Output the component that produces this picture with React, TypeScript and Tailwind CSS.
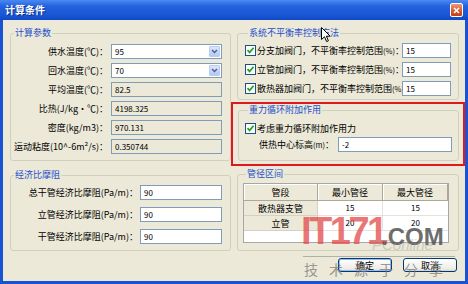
import React from "react";

const Check = () => (
  <span className="flex h-[11px] w-[11px] shrink-0 items-center justify-center border border-[#1C5180] bg-white">
    <svg width="9" height="9" viewBox="0 0 9 9">
      <path d="M1.5 4.2 L3.6 6.4 L7.6 1.8" fill="none" stroke="#21A121" strokeWidth="1.7" />
    </svg>
  </span>
);

const Drop = () => (
  <span className="mr-[1px] flex h-[11px] w-[11px] items-center justify-center rounded-[1px] border border-[#B8CCF8] bg-[linear-gradient(#DCE6FD,#B4C8F6)]">
    <svg width="7" height="5" viewBox="0 0 7 5">
      <path d="M1 1 L3.5 3.5 L6 1" fill="none" stroke="#4D6185" strokeWidth="1.4" />
    </svg>
  </span>
);

type FieldProps = { value: string; readOnly?: boolean; combo?: boolean; className?: string };

const Field = ({ value, readOnly, combo, className = "" }: FieldProps) => (
  <div
    className={`flex h-[15px] items-center border border-[#7F9DB9] ${
      readOnly ? "bg-[#ECE9D8]" : "bg-white"
    } ${className}`}
  >
    <span className="flex-1 pl-[3px] text-[8px] leading-none text-black">{value}</span>
    {combo && <Drop />}
  </div>
);

const Group = ({
  title,
  className = "",
  children,
}: {
  title: string;
  className?: string;
  children: React.ReactNode;
}) => (
  <fieldset className={`rounded-[3px] border border-[#D0D0BF] ${className}`}>
    <legend className="ml-[3px] px-[1px] text-[9px] leading-[10px] text-[#1E4FCB]">{title}</legend>
    {children}
  </fieldset>
);

const params = [
  { label: "供水温度(℃)：", value: "95", combo: true },
  { label: "回水温度(℃)：", value: "70", combo: true },
  { label: "平均温度(℃)：", value: "82.5", ro: true },
  { label: "比热(J/kg·℃)：", value: "4198.325", ro: true },
  { label: "密度(kg/m3)：", value: "970.131", ro: true },
  { label: "运动粘度(10^-6m²/s)：", value: "0.350744", ro: true },
];

const friction = ["总干管经济比摩阻(Pa/m)：", "立管经济比摩阻(Pa/m)：", "干管经济比摩阻(Pa/m)："];

const balance = [
  "分支加阀门，不平衡率控制范围",
  "立管加阀门，不平衡率控制范围",
  "散热器加阀门，不平衡率控制范围",
];

export default function App() {
  return (
    <div className="relative flex h-[284px] w-[468px] flex-col overflow-hidden bg-[#1A52D4] font-['Noto_Sans_CJK_SC',sans-serif] text-black">
      {/* title bar */}
      <div className="flex h-[20px] shrink-0 items-center justify-between bg-[linear-gradient(#4A8AF2,#2463DE_30%,#1856D6_75%,#1148C4)] pl-[5px] pr-[5px]">
        <span className="text-[10px] font-bold leading-none text-white [text-shadow:1px_1px_0_#0A2E8C]">计算条件</span>
        <span className="flex h-[14px] w-[13px] items-center justify-center rounded-[2px] border border-white bg-[linear-gradient(#EE9A78,#D9542C_60%,#C23E1A)]">
          <svg width="7" height="7" viewBox="0 0 7 7">
            <path d="M1 1 L6 6 M6 1 L1 6" stroke="white" strokeWidth="1.6" />
          </svg>
        </span>
      </div>

      {/* body */}
      <div className="mx-[3px] mb-[3px] flex flex-1 gap-[6px] bg-[#ECE9D8] pl-[7px] pr-[6px] pt-[8px]">
        {/* left column */}
        <div className="flex w-[221px] flex-col">
          <Group title="计算参数" className="pb-[6px] pr-[8px]">
            <div className="flex flex-col gap-[4px] pt-[6px]">
              {params.map((p) => (
                <div key={p.label} className="flex items-center">
                  <span className="w-[97px] whitespace-nowrap text-right text-[9px] leading-[10px]">{p.label}</span>
                  <Field value={p.value} combo={p.combo} readOnly={p.ro} className="ml-[3px] flex-1" />
                </div>
              ))}
            </div>
          </Group>
          <Group title="经济比摩阻" className="mt-[9px] pb-[6px] pr-[8px]">
            <div className="flex flex-col gap-[7px] pt-[5px]">
              {friction.map((l) => (
                <div key={l} className="flex items-center">
                  <span className="w-[127px] whitespace-nowrap text-right text-[9px] leading-[10px]">{l}</span>
                  <Field value="90" className="ml-[2px] flex-1" />
                </div>
              ))}
            </div>
          </Group>
        </div>

        {/* right column */}
        <div className="flex w-[222px] flex-col">
          <Group title="系统不平衡率控制方法" className="pb-[3px] pl-[7px] pr-[7px]">
            <div className="flex flex-col gap-[4px] pt-[5px]">
              {balance.map((l, i) => (
                <div key={l} className="flex items-center">
                  <Check />
                  <span className="ml-[1px] w-[145px] whitespace-nowrap text-[9px] leading-[10px]">
                    {l}
                    <span className="text-[7.5px]">(%)</span>
                    {i < 2 ? "：" : ""}
                  </span>
                  <Field value="15" className="flex-1" />
                </div>
              ))}
            </div>
          </Group>

          <div className="-mx-[6px] mt-[2px] border-2 border-[#E0191F] pb-[3px] pl-[5px] pr-[4px] pt-[1px]">
            <Group title="重力循环附加作用" className="pb-[8px] pl-[6px] pr-[6px]">
              <div className="flex flex-col gap-[2px] pt-[7px]">
                <div className="flex h-[13px] items-center">
                  <Check />
                  <span className="ml-[1px] text-[9px] leading-[10px]">考虑重力循环附加作用力</span>
                </div>
                <div className="flex items-center">
                  <span className="w-[85px] whitespace-nowrap pl-[14px] text-[9px] leading-[10px]">
                    供热中心标高<span className="text-[7.5px]">(m)</span>：
                  </span>
                  <Field value="-2" className="ml-[8px] flex-1" />
                </div>
              </div>
            </Group>
          </div>

          <Group title="管径区间" className="mt-[3px] pb-[7px] pl-[5px] pr-[9px]">
            <div className="mt-[4px] flex h-[60px] flex-col border border-[#A7A6AA] bg-white text-[9px] leading-none">
              <div className="grid h-[17px] grid-cols-[74px_65px_1fr]">
                {["管段", "最小管径", "最大管径"].map((h) => (
                  <div
                    key={h}
                    className="flex items-center justify-center border-b border-r border-[#ACA899] bg-[#ECE9D8] shadow-[inset_1px_1px_0_#fff]"
                  >
                    {h}
                  </div>
                ))}
              </div>
              {[
                ["散热器支管", "15", "15"],
                ["立管", "20", "20"],
              ].map((r) => (
                <div key={r[0]} className="grid h-[15px] grid-cols-[74px_65px_1fr]">
                  <div className="flex items-center justify-center border-b border-r border-[#D4D0C8] bg-[#ECE9D8]">{r[0]}</div>
                  <div className="flex items-center justify-center border-b border-r border-[#E4E2DA] text-[8px]">{r[1]}</div>
                  <div className="flex items-center justify-center border-b border-[#E4E2DA] text-[8px]">{r[2]}</div>
                </div>
              ))}
            </div>
          </Group>

          <div className="mt-[7px] flex justify-end gap-[11px] pr-[2px]">
            <button className="h-[14px] w-[54px] rounded-[3px] border border-[#003C74] bg-[linear-gradient(#fff,#ECEBE6_85%,#D6D0C5)] text-[9px] leading-none shadow-[inset_0_0_0_1px_#9DB9EB]">
              确定
            </button>
            <button className="h-[14px] w-[54px] rounded-[3px] border border-[#003C74] bg-[linear-gradient(#fff,#ECEBE6_85%,#D6D0C5)] text-[9px] leading-none">
              取消
            </button>
          </div>
        </div>
      </div>

      {/* watermark */}
      <div className="pointer-events-none absolute left-[301px] top-[212px] font-['Liberation_Sans',sans-serif] text-[38px] font-bold leading-none tracking-[-2.5px] text-[#E24A4A] opacity-75">
        IT171
      </div>
      <div className="pointer-events-none absolute left-[381px] top-[225px] font-['Liberation_Sans',sans-serif] text-[24px] font-bold leading-none text-[#4A4A4A] opacity-80">
        .COM
      </div>
      <div className="pointer-events-none absolute left-[372px] top-[237px] font-['Liberation_Sans',sans-serif] text-[15px] italic leading-none text-[#9A9A9A] opacity-40">
        PConline
      </div>
      <div className="pointer-events-none absolute left-[303px] top-[256px] h-px w-[152px] bg-[#8A8A8A] opacity-60" />
      <div className="pointer-events-none absolute left-[304px] top-[262px] text-[14px] leading-none tracking-[11px] text-[#7A7A7A] opacity-75">
        技术源于分享
      </div>

      {/* mouse cursor */}
      <svg className="pointer-events-none absolute left-[321px] top-[27px]" width="10" height="16" viewBox="0 0 10 16">
        <path d="M0.5 0.5 L0.5 12.5 L3.5 9.8 L5.6 14.6 L7.4 13.8 L5.4 9.2 L9.2 9.2 Z" fill="white" stroke="black" strokeWidth="1" />
      </svg>
    </div>
  );
}
